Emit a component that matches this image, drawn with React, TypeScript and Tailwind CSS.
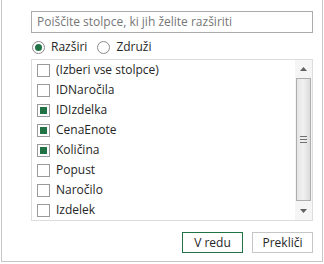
import React from "react";

const items = [
  { label: "(Izberi vse stolpce)", checked: false },
  { label: "IDNaročila", checked: false },
  { label: "IDIzdelka", checked: true },
  { label: "CenaEnote", checked: true },
  { label: "Količina", checked: true },
  { label: "Popust", checked: false },
  { label: "Naročilo", checked: false },
  { label: "Izdelek", checked: false },
];

function Checkbox({ checked }: { checked: boolean }) {
  return (
    <div className="w-[13px] h-[13px] border border-[#9a9a9a] bg-white flex items-center justify-center shrink-0">
      {checked && <div className="w-[7px] h-[7px] bg-[#217346]" />}
    </div>
  );
}

function Radio({ checked }: { checked: boolean }) {
  return (
    <div className="w-[13px] h-[13px] rounded-full border border-[#8a8a8a] bg-white flex items-center justify-center shrink-0">
      {checked && <div className="w-[7px] h-[7px] rounded-full bg-[#217346]" />}
    </div>
  );
}

export default function App() {
  return (
    <div
      className="w-[324px] h-[264px] bg-white text-[12px] text-[#262626] overflow-hidden"
      style={{ fontFamily: '"Open Sans", "Noto Sans", sans-serif' }}
    >
      <div className="ml-[1px] w-[322px] h-[262px] border-l border-r border-b border-[#c6c6c6] pl-[29px] pt-[11px] flex flex-col">
        <div className="w-[282px] h-[22px] border border-[#ababab] flex items-center pl-[5px] text-[#767676]">
          Poiščite stolpce, ki jih želite razširiti
        </div>
        <div className="h-[20px] mt-[4px] flex items-center pl-[1px]">
          <Radio checked={true} />
          <span className="ml-[6px]">Razširi</span>
          <div className="ml-[10px]">
            <Radio checked={false} />
          </div>
          <span className="ml-[6px]">Združi</span>
        </div>
        <div className="mt-[2px] w-[282px] h-[162px] border border-[#dcdcdc] flex">
          <div className="flex-1 flex flex-col">
            {items.map((it) => (
              <div key={it.label} className="h-[20px] flex items-center pl-[5px]">
                <Checkbox checked={it.checked} />
                <span className="ml-[6px]">{it.label}</span>
              </div>
            ))}
          </div>
          <div className="w-[17px] bg-[#f5f5f5] flex flex-col">
            <div className="h-[18px] flex items-center justify-center">
              <svg width="7" height="4" viewBox="0 0 7 4">
                <polygon points="3.5,0 7,4 0,4" fill="#606060" />
              </svg>
            </div>
            <div className="h-[123px] mx-[1px] border border-[#adadad] bg-gradient-to-r from-[#e6e6e6] via-[#f0f0f0] to-[#dcdcdc] flex items-center justify-center">
              <div className="flex flex-col gap-[2px]">
                <div className="w-[7px] h-[1px] bg-[#707070]" />
                <div className="w-[7px] h-[1px] bg-[#707070]" />
                <div className="w-[7px] h-[1px] bg-[#707070]" />
              </div>
            </div>
            <div className="flex-1 flex items-center justify-center">
              <svg width="7" height="4" viewBox="0 0 7 4">
                <polygon points="0,0 7,0 3.5,4" fill="#606060" />
              </svg>
            </div>
          </div>
        </div>
        <div className="mt-[11px] w-[282px] flex justify-end gap-[9px]">
          <button className="w-[61px] h-[21px] border border-[#217346] bg-white flex items-center justify-center">
            V redu
          </button>
          <button className="w-[61px] h-[21px] border border-[#c6c6c6] bg-white flex items-center justify-center">
            Prekliči
          </button>
        </div>
      </div>
    </div>
  );
}
